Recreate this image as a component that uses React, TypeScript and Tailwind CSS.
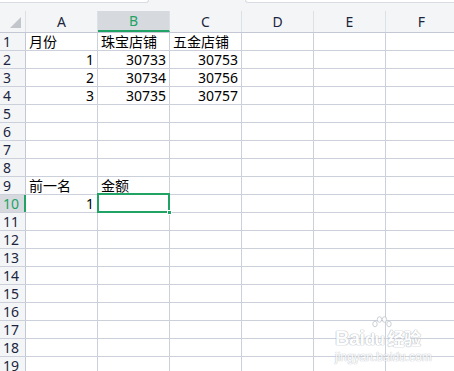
import React from "react";

const cols = ["A", "B", "C", "D", "E", "F"];

type Cell = { t: string; align?: "l" | "r" };

const data: Record<number, Cell[]> = {
  1: [{ t: "月份" }, { t: "珠宝店铺" }, { t: "五金店铺" }],
  2: [{ t: "1", align: "r" }, { t: "30733", align: "r" }, { t: "30753", align: "r" }],
  3: [{ t: "2", align: "r" }, { t: "30734", align: "r" }, { t: "30756", align: "r" }],
  4: [{ t: "3", align: "r" }, { t: "30735", align: "r" }, { t: "30757", align: "r" }],
  9: [{ t: "前一名" }, { t: "金额" }],
  10: [{ t: "1", align: "r" }],
};

const font = {
  fontFamily: '"Noto Sans", "Noto Sans CJK SC", sans-serif',
};

export default function App() {
  const rows = Array.from({ length: 19 }, (_, i) => i + 1);
  return (
    <div
      className="relative w-[454px] h-[371px] overflow-hidden bg-white text-[14px]"
      style={font}
    >
      {/* top strip */}
      <div className="h-[11px] bg-[#f4f5f7] relative">
        <div className="absolute left-0 top-0 w-[149px] h-[3px] bg-white border-b border-r border-[#d9dce3] rounded-br-[3px]" />
        <div className="absolute left-[245px] top-0 w-[220px] h-[3px] bg-white border-b border-l border-[#d9dce3] rounded-bl-[3px]" />
      </div>
      {/* column header */}
      <div className="flex h-[22px] bg-[#f4f5f7] border-b border-[#c3c8d4]">
        <div className="w-[26px] shrink-0 border-r border-[#dde0e6] relative">
          <div
            className="absolute right-[4px] bottom-[4px] w-0 h-0"
            style={{
              borderLeft: "11px solid transparent",
              borderBottom: "11px solid #c2c5cb",
            }}
          />
        </div>
        {cols.map((c) => (
          <div
            key={c}
            className={
              "w-[72px] shrink-0 border-r border-[#dde0e6] flex items-center justify-center leading-none " +
              (c === "B"
                ? "bg-[#d6d9de] text-[#21a366] border-b-2 border-b-[#21a366]"
                : "text-[#1b2540]")
            }
          >
            <span className="pt-[1px]">{c}</span>
          </div>
        ))}
      </div>
      {rows.map((r) => (
        <div key={r} className="flex h-[18px] border-b border-[#cbd0da]">
          <div
            className={
              "w-[26px] shrink-0 pl-[3px] flex items-center leading-none " +
              (r === 10
                ? "bg-[#d6d9de] text-[#21a366] border-r-2 border-[#21a366]"
                : "bg-[#f4f5f7] text-[#1b2540] border-r border-[#c3c8d4]")
            }
          >
            {r}
          </div>
          {cols.map((c, ci) => {
            const cell = data[r]?.[ci];
            return (
              <div
                key={c}
                className={
                  "w-[72px] shrink-0 border-r border-[#cbd0da] flex items-center px-[3px] leading-none text-black " +
                  (cell?.align === "r" ? "justify-end" : "justify-start")
                }
              >
                {cell?.t}
              </div>
            );
          })}
        </div>
      ))}
      {/* selection B10 */}
      <div className="absolute left-[97px] top-[193px] w-[73px] h-[20px] border-2 border-[#21a366] pointer-events-none">
        <div className="absolute -right-[4px] -bottom-[4px] w-[5px] h-[5px] bg-[#21a366] border border-white" />
      </div>
      {/* watermark */}
      <div className="absolute left-[335px] top-[316px] flex flex-col items-start pointer-events-none opacity-85">
        <svg
          width="22"
          height="14"
          viewBox="0 0 22 14"
          className="ml-[36px]"
          fill="white"
          stroke="#b8bcc4"
          strokeWidth="0.8"
        >
          <ellipse cx="4" cy="8" rx="2.2" ry="2.8" />
          <ellipse cx="8.5" cy="3.5" rx="2.2" ry="2.8" />
          <ellipse cx="13.5" cy="3.5" rx="2.2" ry="2.8" />
          <ellipse cx="18" cy="8" rx="2.2" ry="2.8" />
        </svg>
        <div
          className="text-[20px] font-bold leading-none text-white tracking-tight -mt-[2px]"
          style={{
            fontFamily: '"Liberation Sans", "Noto Sans CJK SC", sans-serif',
            textShadow: "0 0 1px #aeb3bc, 0 0 1px #aeb3bc, 0 0 1px #aeb3bc",
          }}
        >
          Bai<span className="text-[17px]">du</span>
          <span className="text-[17px] ml-[3px]">经验</span>
        </div>
        <div
          className="text-[12px] leading-none text-white mt-[3px]"
          style={{
            fontFamily: '"Liberation Sans", sans-serif',
            textShadow: "0 0 1px #aeb3bc, 0 0 1px #aeb3bc",
          }}
        >
          jingyan.baidu.com
        </div>
      </div>
    </div>
  );
}
